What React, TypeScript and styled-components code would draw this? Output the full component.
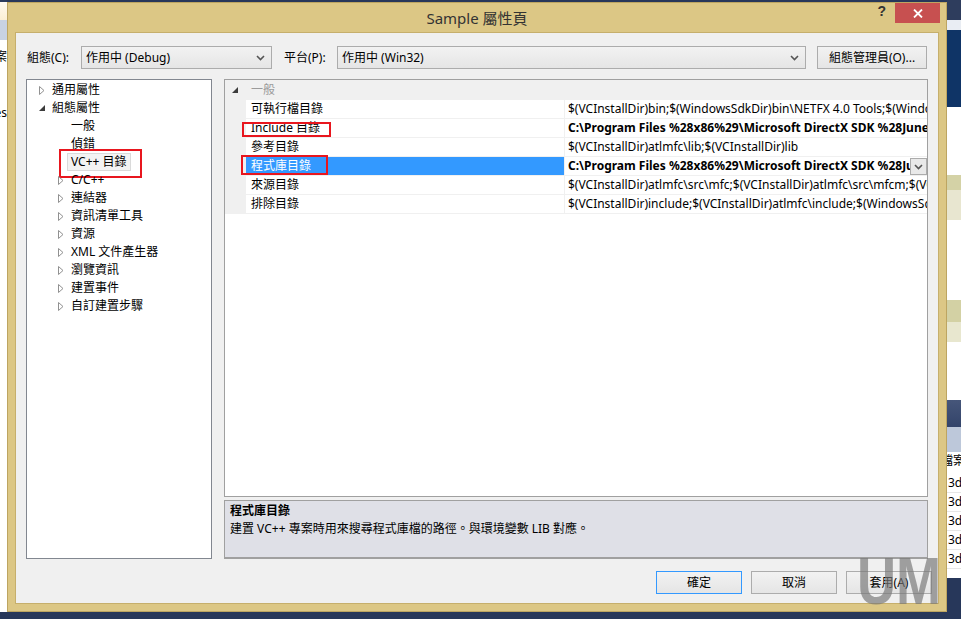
import React from "react";
import styled, { createGlobalStyle } from "styled-components";

const FONT = `"Noto Sans", "Noto Sans CJK TC", sans-serif`;

const GlobalStyle = createGlobalStyle`
  html, body { margin: 0; padding: 0; }
  body {
    background: #27375a;
    font-family: ${FONT};
    font-size: 12px;
    color: #000;
    overflow: hidden;
  }
  * { box-sizing: border-box; }
`;

/* ---------- desktop behind the dialog ---------- */

const Desktop = styled.div`
  position: relative;
  display: flex;
  width: 961px;
  height: 619px;
  overflow: hidden;
  background: #27375a;
`;

const Strip = styled.div<{ $w: number }>`
  width: ${(p) => p.$w}px;
  flex: none;
  display: flex;
  flex-direction: column;
  overflow: hidden;
`;

const Band = styled.div<{ $h: number; $bg: string }>`
  height: ${(p) => p.$h}px;
  flex: none;
  background: ${(p) => p.$bg};
  overflow: hidden;
  display: flex;
  flex-direction: column;
`;

const StripText = styled.div<{ $top: number; $right?: boolean; $shift?: number }>`
  margin-top: ${(p) => p.$top}px;
  margin-left: ${(p) => p.$shift ?? 0}px;
  height: 16px;
  line-height: 16px;
  font-size: 12px;
  white-space: nowrap;
  display: flex;
  justify-content: ${(p) => (p.$right ? "flex-end" : "flex-start")};
`;

const StripRow = styled.div`
  height: 19px;
  flex: none;
  line-height: 18px;
  font-size: 12px;
  padding-left: 1px;
  border-bottom: 1px solid #e6e6e6;
  white-space: nowrap;
`;

/* ---------- dialog frame ---------- */

const Center = styled.div`
  width: 940px;
  flex: none;
  display: flex;
  flex-direction: column;
`;

const Edge = styled.div<{ $h: number }>`
  height: ${(p) => p.$h}px;
  flex: none;
  background: #27375a;
`;

const Dialog = styled.div`
  height: 610px;
  flex: none;
  display: flex;
  flex-direction: column;
  background: #dcc785;
  border: 1px solid #bda561;
  padding: 0 7px 7px;
`;

const TitleBar = styled.div`
  height: 29px;
  flex: none;
  display: grid;
  grid-template-columns: 1fr auto 1fr;
`;

const Title = styled.div`
  grid-column: 2;
  align-self: center;
  font-size: 15px;
  line-height: 20px;
  color: #333;
  white-space: nowrap;
`;

const Caption = styled.div`
  grid-column: 3;
  display: flex;
  justify-content: flex-end;
  align-items: flex-start;
  gap: 9px;
  margin-right: -1px;
`;

const HelpMark = styled.div`
  height: 20px;
  line-height: 20px;
  font: bold 14px "Liberation Sans", sans-serif;
  color: #333;
`;

const CloseButton = styled.div`
  width: 45px;
  height: 20px;
  background: #c75050;
  display: flex;
  align-items: center;
  justify-content: center;
`;

const Body = styled.div`
  flex: 1;
  display: flex;
  flex-direction: column;
  background: #f0f0f0;
  border: 1px solid #c6af6c;
  padding: 13px 10px 9px;
`;

/* ---------- top toolbar ---------- */

const Toolbar = styled.div`
  height: 23px;
  flex: none;
  display: flex;
  align-items: center;
  padding: 0 1px;
`;

const Label = styled.div<{ $w: number; $gap?: number }>`
  width: ${(p) => p.$w}px;
  margin-left: ${(p) => p.$gap ?? 0}px;
  flex: none;
  line-height: 18px;
  white-space: nowrap;
`;

const Select = styled.div<{ $w?: number }>`
  ${(p) => (p.$w ? `width: ${p.$w}px; flex: none;` : "flex: 1;")}
  height: 23px;
  border: 1px solid #acacac;
  background: linear-gradient(#f2f2f2, #e5e5e5);
  display: flex;
  align-items: center;
  justify-content: space-between;
  padding: 0 6px 0 4px;
  line-height: 18px;
  white-space: nowrap;
`;

const PushButton = styled.div<{ $w: number; $gap?: number; $default?: boolean }>`
  width: ${(p) => p.$w}px;
  margin-left: ${(p) => p.$gap ?? 0}px;
  flex: none;
  height: 23px;
  border: 1px solid ${(p) => (p.$default ? "#3399ff" : "#acacac")};
  background: linear-gradient(#f2f2f2, #e5e5e5);
  display: flex;
  align-items: center;
  justify-content: center;
  line-height: 18px;
  white-space: nowrap;
`;

/* ---------- main area ---------- */

const MainRow = styled.div`
  margin-top: 10px;
  height: 480px;
  flex: none;
  display: flex;
  gap: 12px;
`;

const TreePanel = styled.div`
  width: 186px;
  flex: none;
  background: #fff;
  border: 1px solid #828790;
  padding-top: 1px;
  display: flex;
  flex-direction: column;
`;

const TreeItem = styled.div<{ $level: number }>`
  position: relative;
  height: 18px;
  flex: none;
  display: flex;
  align-items: center;
  padding-left: ${(p) => (p.$level === 1 ? 12 : 31)}px;
  line-height: 18px;
  white-space: nowrap;
`;

const ArrowBox = styled.div`
  width: 13px;
  flex: none;
  display: flex;
  align-items: center;
`;

const TreeLabel = styled.div<{ $selected?: boolean }>`
  height: 18px;
  display: flex;
  align-items: center;
  ${(p) =>
    p.$selected
      ? `border: 1px solid #dadada; background: #f3f3f3; padding: 0 3px; margin-left: -4px;`
      : ""}
`;

const RedMark = styled.div<{ $l: number; $t: number; $w: number; $h: number }>`
  position: absolute;
  left: ${(p) => p.$l}px;
  top: ${(p) => p.$t}px;
  width: ${(p) => p.$w}px;
  height: ${(p) => p.$h}px;
  border: 2px solid #e8161e;
  pointer-events: none;
`;

const RightColumn = styled.div`
  flex: 1;
  display: flex;
  flex-direction: column;
  gap: 3px;
`;

const Grid = styled.div`
  height: 418px;
  flex: none;
  background: #fff;
  border: 1px solid #a0a0a0;
  display: flex;
  flex-direction: column;
  overflow: hidden;
`;

const CategoryRow = styled.div`
  height: 20px;
  flex: none;
  background: #f0f0f0;
  display: flex;
  align-items: center;
  padding-left: 7px;
  color: #9b9b9b;
  line-height: 18px;
`;

const CategoryArrow = styled.div`
  width: 19px;
  flex: none;
  display: flex;
  align-items: center;
`;

const PropRow = styled.div`
  position: relative;
  height: 19px;
  flex: none;
  display: grid;
  grid-template-columns: 21px 318px 1fr;
  background: #f0f0f0;
  border-bottom: 1px solid #f0f0f0;
`;

const NameCell = styled.div<{ $selected?: boolean }>`
  height: 18px;
  padding-left: 5px;
  line-height: 18px;
  white-space: nowrap;
  overflow: hidden;
  background: ${(p) => (p.$selected ? "#3399ff" : "#fff")};
  color: ${(p) => (p.$selected ? "#fff" : "#000")};
`;

const ValueCell = styled.div<{ $bold?: boolean }>`
  height: 18px;
  margin-left: 1px;
  padding-left: 3px;
  display: flex;
  align-items: center;
  background: #fff;
  font-weight: ${(p) => (p.$bold ? 700 : 400)};
  overflow: hidden;
`;

const ValueText = styled.div`
  flex: 1;
  min-width: 0;
  line-height: 18px;
  white-space: nowrap;
  overflow: hidden;
`;

const DropButton = styled.div`
  width: 17px;
  height: 17px;
  flex: none;
  margin-top: 1px;
  border: 1px solid #acacac;
  background: #e9e9e9;
  display: flex;
  align-items: center;
  justify-content: center;
`;

const Description = styled.div`
  height: 59px;
  flex: none;
  background: #dfe0e7;
  border: 1px solid #a0a0a0;
  border-bottom-width: 2px;
  padding: 1px 5px 0;
  line-height: 18px;
  white-space: nowrap;
`;

const DescTitle = styled.div`
  font-weight: 700;
`;

const Footer = styled.div`
  margin-top: 12px;
  margin-right: -4px;
  height: 23px;
  flex: none;
  display: flex;
  justify-content: flex-end;
  gap: 9px;
`;

const Watermark = styled.div`
  position: absolute;
  left: 857px;
  top: 548px;
  font: bold 66px "Liberation Sans", sans-serif;
  line-height: 66px;
  color: rgba(120, 120, 120, 0.68);
  transform: scaleX(0.82);
  transform-origin: left top;
  pointer-events: none;
  white-space: nowrap;
`;

/* ---------- icons ---------- */

const Chevron = () => (
  <svg width="9" height="6" viewBox="0 0 9 6">
    <polyline points="1,1 4.5,4.5 8,1" fill="none" stroke="#555" strokeWidth="1.6" />
  </svg>
);

const ClosedArrow = () => (
  <svg width="6" height="9" viewBox="0 0 6 9">
    <polygon points="0.5,0.5 5,4.5 0.5,8.5" fill="#fff" stroke="#919191" strokeWidth="1" />
  </svg>
);

const OpenArrow = () => (
  <svg width="6" height="6" viewBox="0 0 6 6">
    <polygon points="6,0 6,6 0,6" fill="#3c3c3c" />
  </svg>
);

const CloseX = () => (
  <svg width="10" height="9" viewBox="0 0 10 9">
    <path d="M1 0.5 L9 8.5 M9 0.5 L1 8.5" stroke="#fff" strokeWidth="1.8" />
  </svg>
);

/* ---------- data ---------- */

type Tree = { label: string; level: number; arrow?: "open" | "closed"; selected?: boolean };

const tree: Tree[] = [
  { label: "通用屬性", level: 1, arrow: "closed" },
  { label: "組態屬性", level: 1, arrow: "open" },
  { label: "一般", level: 2 },
  { label: "偵錯", level: 2 },
  { label: "VC++ 目錄", level: 2, selected: true },
  { label: "C/C++", level: 2, arrow: "closed" },
  { label: "連結器", level: 2, arrow: "closed" },
  { label: "資訊清單工具", level: 2, arrow: "closed" },
  { label: "資源", level: 2, arrow: "closed" },
  { label: "XML 文件產生器", level: 2, arrow: "closed" },
  { label: "瀏覽資訊", level: 2, arrow: "closed" },
  { label: "建置事件", level: 2, arrow: "closed" },
  { label: "自訂建置步驟", level: 2, arrow: "closed" },
];

type Prop = {
  name: string;
  value: string;
  bold?: boolean;
  selected?: boolean;
  mark?: { l: number; t: number; w: number; h: number };
};

const props: Prop[] = [
  {
    name: "可執行檔目錄",
    value:
      "$(VCInstallDir)bin;$(WindowsSdkDir)bin\\NETFX 4.0 Tools;$(WindowsSdkDir)bin;$(VSInstallDir)Common7\\Tools\\bin",
  },
  {
    name: "Include 目錄",
    value: "C:\\Program Files %28x86%29\\Microsoft DirectX SDK %28June 2010%29\\Include;$(IncludePath)",
    bold: true,
    mark: { l: 17, t: 3, w: 89, h: 15 },
  },
  { name: "參考目錄", value: "$(VCInstallDir)atlmfc\\lib;$(VCInstallDir)lib" },
  {
    name: "程式庫目錄",
    value: "C:\\Program Files %28x86%29\\Microsoft DirectX SDK %28June 2010%29\\Lib\\x86;$(LibraryPath)",
    bold: true,
    selected: true,
    mark: { l: 16, t: -2, w: 87, h: 20 },
  },
  {
    name: "來源目錄",
    value:
      "$(VCInstallDir)atlmfc\\src\\mfc;$(VCInstallDir)atlmfc\\src\\mfcm;$(VCInstallDir)atlmfc\\src\\atl;$(VCInstallDir)crt\\src",
  },
  {
    name: "排除目錄",
    value:
      "$(VCInstallDir)include;$(VCInstallDir)atlmfc\\include;$(WindowsSdkDir)include;$(FrameworkSDKDir)\\include",
  },
];

export default function App() {
  return (
    <>
      <GlobalStyle />
      <Desktop>
        <Strip $w={7}>
          <Band $h={2} $bg="#2b3b5b" />
          <Band $h={18} $bg="linear-gradient(#fffaf0, #fbefd4)" />
          <Band $h={20} $bg="#c8d2e2" />
          <Band $h={572} $bg="#ffffff">
            <StripText $top={9} $right>
              檔案
            </StripText>
            <StripText $top={40} $right>
              Properties
            </StripText>
          </Band>
          <Band $h={7} $bg="#27375a" />
        </Strip>

        <Center>
          <Edge $h={2} />
          <Dialog>
            <TitleBar>
              <Title>Sample 屬性頁</Title>
              <Caption>
                <HelpMark>?</HelpMark>
                <CloseButton>
                  <CloseX />
                </CloseButton>
              </Caption>
            </TitleBar>
            <Body>
              <Toolbar>
                <Label $w={54}>組態(C):</Label>
                <Select $w={191}>
                  <span>作用中 (Debug)</span>
                  <Chevron />
                </Select>
                <Label $w={53} $gap={12}>
                  平台(P):
                </Label>
                <Select>
                  <span>作用中 (Win32)</span>
                  <Chevron />
                </Select>
                <PushButton $w={110} $gap={11}>
                  組態管理員(O)...
                </PushButton>
              </Toolbar>

              <MainRow>
                <TreePanel>
                  {tree.map((t) => (
                    <TreeItem key={t.label} $level={t.level}>
                      <ArrowBox>
                        {t.arrow === "closed" && <ClosedArrow />}
                        {t.arrow === "open" && <OpenArrow />}
                      </ArrowBox>
                      <TreeLabel $selected={t.selected}>{t.label}</TreeLabel>
                      {t.selected && <RedMark $l={32} $t={-4} $w={83} $h={29} />}
                    </TreeItem>
                  ))}
                </TreePanel>

                <RightColumn>
                  <Grid>
                    <CategoryRow>
                      <CategoryArrow>
                        <OpenArrow />
                      </CategoryArrow>
                      一般
                    </CategoryRow>
                    {props.map((p) => (
                      <PropRow key={p.name}>
                        <span />
                        <NameCell $selected={p.selected}>{p.name}</NameCell>
                        <ValueCell $bold={p.bold}>
                          <ValueText>{p.value}</ValueText>
                          {p.selected && (
                            <DropButton>
                              <Chevron />
                            </DropButton>
                          )}
                        </ValueCell>
                        {p.mark && <RedMark $l={p.mark.l} $t={p.mark.t} $w={p.mark.w} $h={p.mark.h} />}
                      </PropRow>
                    ))}
                  </Grid>
                  <Description>
                    <DescTitle>程式庫目錄</DescTitle>
                    <div>建置 VC++ 專案時用來搜尋程式庫檔的路徑。與環境變數 LIB 對應。</div>
                  </Description>
                </RightColumn>
              </MainRow>

              <Footer>
                <PushButton $w={86} $default>
                  確定
                </PushButton>
                <PushButton $w={86}>取消</PushButton>
                <PushButton $w={86}>套用(A)</PushButton>
              </Footer>
            </Body>
          </Dialog>
          <Edge $h={7} />
        </Center>

        <Strip $w={14}>
          <Band $h={20} $bg="#2e3d5d" />
          <Band $h={10} $bg="#e9edf3" />
          <Band $h={77} $bg="#0f3466" />
          <Band $h={68} $bg="#ffffff" />
          <Band $h={15} $bg="#d4d2a6" />
          <Band $h={30} $bg="#e8e6d0" />
          <Band $h={80} $bg="#ffffff" />
          <Band $h={22} $bg="#d3d1a4" />
          <Band $h={20} $bg="#e8e7cf" />
          <Band $h={58} $bg="#ffffff" />
          <Band $h={27} $bg="linear-gradient(#46567a, #33446a)" />
          <Band $h={25} $bg="#bdc8da" />
          <Band $h={18} $bg="#ffffff">
            <StripText $top={1} $shift={-6}>
              檔案
            </StripText>
          </Band>
          <Band $h={108} $bg="#ffffff">
            <Band $h={4} $bg="#ffffff" />
            <StripRow>3d</StripRow>
            <StripRow>3d</StripRow>
            <StripRow>3d</StripRow>
            <StripRow>3d</StripRow>
            <StripRow>3d</StripRow>
          </Band>
          <Band $h={41} $bg="#27375a" />
        </Strip>

        <Watermark>UM</Watermark>
      </Desktop>
    </>
  );
}
